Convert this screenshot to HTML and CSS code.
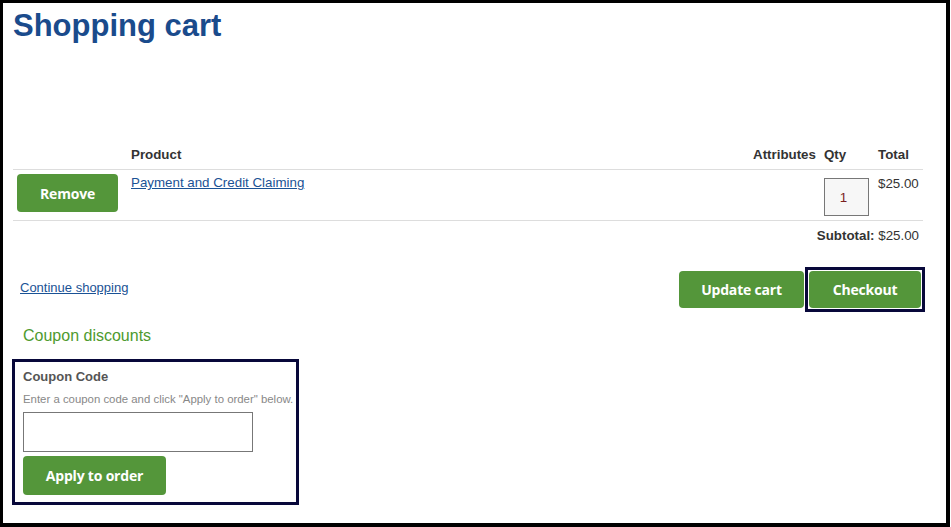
FILE: index.html
```html
<!DOCTYPE html>
<html lang="en">
<head>
  <meta charset="UTF-8" />
  <meta name="viewport" content="width=device-width, initial-scale=1.0"/>
  <title>Shopping cart</title>
  <link rel="stylesheet" href="styles.css">
</head>
<body>

  <div class="page">
    <h1 class="page-title">Shopping cart</h1>

    <form class="cart-form" onsubmit="return false;">
      <table class="cart-table">
        <colgroup>
          <col class="col-remove">
          <col>
          <col class="col-attr">
          <col class="col-qty">
          <col class="col-total">
        </colgroup>
        <thead>
          <tr>
            <th></th>
            <th>Product</th>
            <th>Attributes</th>
            <th>Qty</th>
            <th>Total</th>
          </tr>
        </thead>
        <tbody>
          <tr class="item-row">
            <td><button class="btn btn-remove" type="button">Remove</button></td>
            <td><a href="#" class="product-link">Payment and Credit Claiming</a></td>
            <td></td>
            <td><input class="qty-input" type="text" value="1"></td>
            <td class="price">$25.00</td>
          </tr>
          <tr class="subtotal-row">
            <td colspan="5"><strong>Subtotal:</strong> $25.00</td>
          </tr>
        </tbody>
      </table>

      <div class="cart-actions">
        <a href="#" class="continue-link">Continue shopping</a>
        <div class="cart-buttons">
          <button class="btn" type="button">Update cart</button>
          <span class="checkout-frame">
            <button class="btn btn-checkout" type="button">Checkout</button>
          </span>
        </div>
      </div>
    </form>

    <h2 class="coupon-title">Coupon discounts</h2>

    <div class="coupon-box">
      <label class="coupon-label" for="couponCode">Coupon Code</label>
      <div class="coupon-desc">Enter a coupon code and click "Apply to order" below.</div>
      <input class="coupon-input" id="couponCode" type="text">
      <button class="btn btn-apply" type="button">Apply to order</button>
    </div>
  </div>

</body>
</html>
```

FILE: styles.css
```css
body {
  margin: 0;
  font-family: "Liberation Sans", Arial, sans-serif;
  background: white;
  color: #333;
}

.page {
  width: 950px;
  height: 527px;
  box-sizing: border-box;
  border: 3px solid #000;
  border-right-width: 4px;
  border-bottom-width: 4px;
  padding: 0 23px 0 10px;
}

.page-title {
  margin: 5px 0 0;
  font-size: 31px;
  font-weight: bold;
  color: #1a4b8c;
}

/* cart table */
.cart-table {
  width: 910px;
  table-layout: fixed;
  border-collapse: collapse;
  margin-top: 99px;
  font-size: 13.33px;
}

.col-remove { width: 114px; }
.col-attr { width: 71px; }
.col-qty { width: 54px; }
.col-total { width: 49px; }

.cart-table th {
  text-align: left;
  font-weight: bold;
  padding: 4px 4px 7px;
  border-bottom: 1px solid #ddd;
  color: #333;
}

.cart-table td {
  vertical-align: top;
  padding: 4px;
}

.item-row td {
  border-bottom: 1px solid #ddd;
}

.product-link {
  color: #1a5295;
  display: inline-block;
  margin-top: 1px;
}

.qty-input {
  width: 45px;
  height: 38px;
  box-sizing: border-box;
  margin-top: 4px;
  padding: 0 6px 0 0;
  border: 1px solid #777;
  background: #f7f7f7;
  text-align: center;
  font-family: "Liberation Sans", Arial, sans-serif;
  font-size: 13.33px;
  color: #7a1f1f;
}

.price {
  color: #333;
}

.cart-table .price {
  padding-top: 6px;
}

.cart-table .subtotal-row td {
  text-align: right;
  padding: 7px 4px 3px;
}

/* buttons */
.btn {
  background-color: #54963a;
  color: white;
  border: none;
  border-radius: 4px;
  font-family: "Open Sans", sans-serif;
  font-weight: bold;
  font-size: 14px;
  letter-spacing: -0.2px;
  height: 37px;
  padding: 0 24px;
  cursor: pointer;
}

.btn-remove {
  width: 101px;
  height: 38px;
  padding: 0;
}

.cart-actions {
  display: flex;
  justify-content: space-between;
  align-items: center;
  margin-top: 25px;
  padding: 0 2px 0 7px;
}

.continue-link {
  color: #1a5295;
  font-size: 13px;
  margin-top: -5px;
}

.cart-buttons {
  display: flex;
  align-items: center;
  gap: 5px;
}

.cart-buttons .btn {
  width: 125px;
  padding: 0;
}

/* highlight frame drawn round the checkout button */
.checkout-frame {
  display: block;
  margin: -4px;
  padding: 1px;
  border: 3px solid #08083a;
}

.cart-buttons .btn-checkout {
  display: block;
  width: 112px;
}

/* coupon */
.coupon-title {
  margin: 19px 0 0 10px;
  font-size: 16px;
  font-weight: normal;
  color: #4e9a2e;
}

.coupon-box {
  width: 287px;
  box-sizing: border-box;
  margin: 14px 0 0 -1px;
  border: 3px solid #08083a;
  padding: 7px 8px 7px;
  display: flex;
  flex-direction: column;
  align-items: flex-start;
}

.coupon-label {
  font-size: 13px;
  font-weight: bold;
  color: #555;
}

.coupon-desc {
  margin-top: 9px;
  font-size: 11.4px;
  color: #888;
  white-space: nowrap;
}

.coupon-input {
  width: 230px;
  height: 40px;
  box-sizing: border-box;
  margin-top: 7px;
  border: 1px solid #777;
}

.btn-apply {
  margin-top: 4px;
  width: 143px;
  height: 39px;
  padding: 0;
}
```
